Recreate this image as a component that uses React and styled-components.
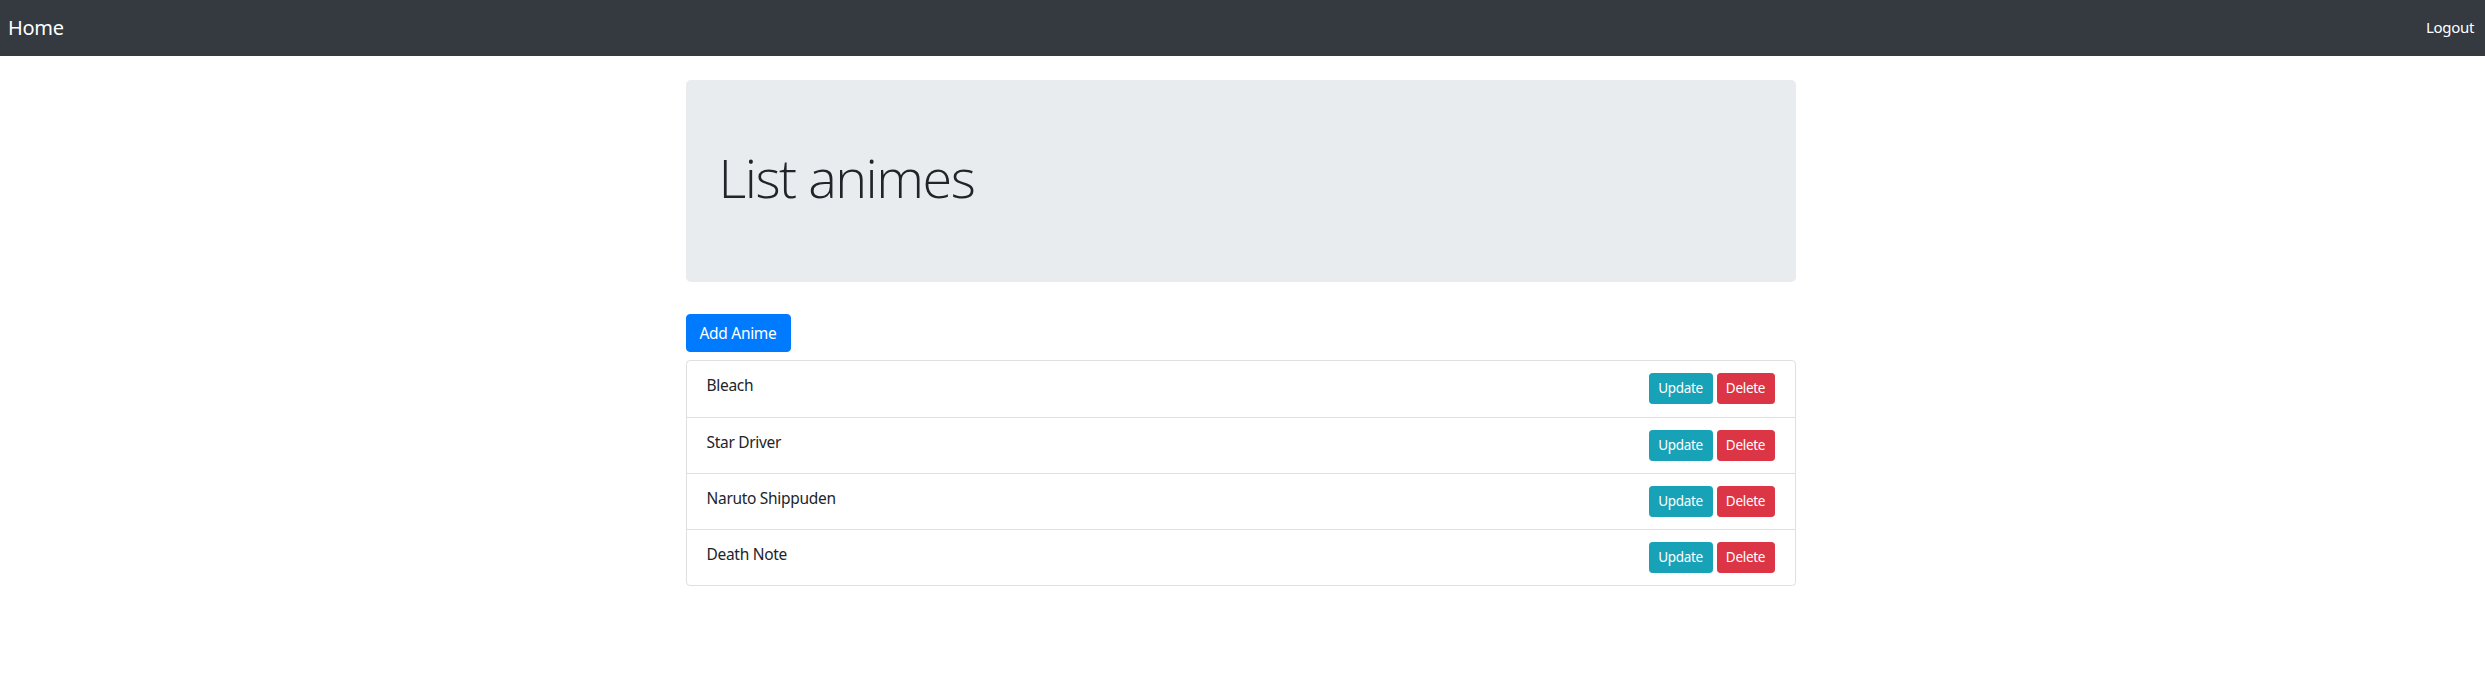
import React from 'react';
import styled, {createGlobalStyle} from 'styled-components';

const GlobalStyle = createGlobalStyle`
  html, body {
    margin: 0;
    padding: 0;
    background: #fff;
  }
  body {
    font-family: "Noto Sans", "Open Sans", "Liberation Sans", sans-serif;
    font-size: 16px;
    line-height: 1.5;
    color: #212529;
  }
  * {
    box-sizing: border-box;
  }
`;

const Navbar = styled.nav`
  height: 56px;
  background-color: #343a40;
  display: flex;
  align-items: center;
  justify-content: space-between;
  padding: 0 11px 0 8px;
`;

const Brand = styled.a`
  font-size: 20px;
  line-height: 30px;
  color: #fff;
  text-decoration: none;
  letter-spacing: -0.3px;
`;

const NavLink = styled.a`
  font-size: 15px;
  line-height: 24px;
  color: #fff;
  text-decoration: none;
  margin-top: -2px;
  letter-spacing: -0.3px;
`;

const Container = styled.div`
  width: 1110px;
  margin: 24px 0 0 calc(50% - 557px);
`;

const Jumbotron = styled.div`
  background-color: #e9ecef;
  border-radius: 4.8px;
  height: 202px;
  padding: 64px 33px;
  margin-bottom: 32px;
`;

const Title = styled.h1`
  margin: 0;
  font-family: "Open Sans", "Noto Sans", sans-serif;
  font-weight: 300;
  font-size: 54px;
  line-height: 67px;
  letter-spacing: -1.5px;
  color: #212529;
`;

const Button = styled.button`
  border: 1px solid ${p => p.$bg};
  background-color: ${p => p.$bg};
  color: #fff;
  font-family: inherit;
  font-size: ${p => (p.$small ? '13.5px' : '15.5px')};
  line-height: ${p => (p.$small ? '21px' : '24px')};
  padding: ${p => (p.$small ? '4px 6px' : '6px 10px')};
  border-radius: ${p => (p.$small ? '3.2px' : '4px')};
  letter-spacing: -0.3px;
  cursor: pointer;
`;

const AddButton = styled(Button)`
  margin-bottom: 8px;
  width: 105px;
`;

const ListGroup = styled.ul`
  list-style: none;
  margin: 0;
  padding: 0;
  border: 1px solid rgba(0, 0, 0, 0.125);
  border-radius: 4px;
`;

const ListItem = styled.li`
  display: flex;
  justify-content: space-between;
  align-items: flex-start;
  padding: 12px 20px;
  height: 56px;
  border-top: ${p => (p.$first ? 'none' : '1px solid rgba(0, 0, 0, 0.125)')};
`;

const ItemName = styled.span`
  font-size: 15.5px;
  line-height: 24px;
  letter-spacing: -0.3px;
`;

const Actions = styled.div`
  display: flex;
  gap: 4px;
`;

const animes = ['Bleach', 'Star Driver', 'Naruto Shippuden', 'Death Note'];

const App = () => (
  <>
    <GlobalStyle />
    <Navbar>
      <Brand href="#">Home</Brand>
      <NavLink href="#">Logout</NavLink>
    </Navbar>
    <Container>
      <Jumbotron>
        <Title>List animes</Title>
      </Jumbotron>
      <AddButton $bg="#007bff">Add Anime</AddButton>
      <ListGroup>
        {animes.map((name, i) => (
          <ListItem key={name} $first={i === 0}>
            <ItemName>{name}</ItemName>
            <Actions>
              <Button $small $bg="#17a2b8" style={{width: 64}}>Update</Button>
              <Button $small $bg="#dc3545" style={{width: 58}}>Delete</Button>
            </Actions>
          </ListItem>
        ))}
      </ListGroup>
    </Container>
  </>
);

export default App;
